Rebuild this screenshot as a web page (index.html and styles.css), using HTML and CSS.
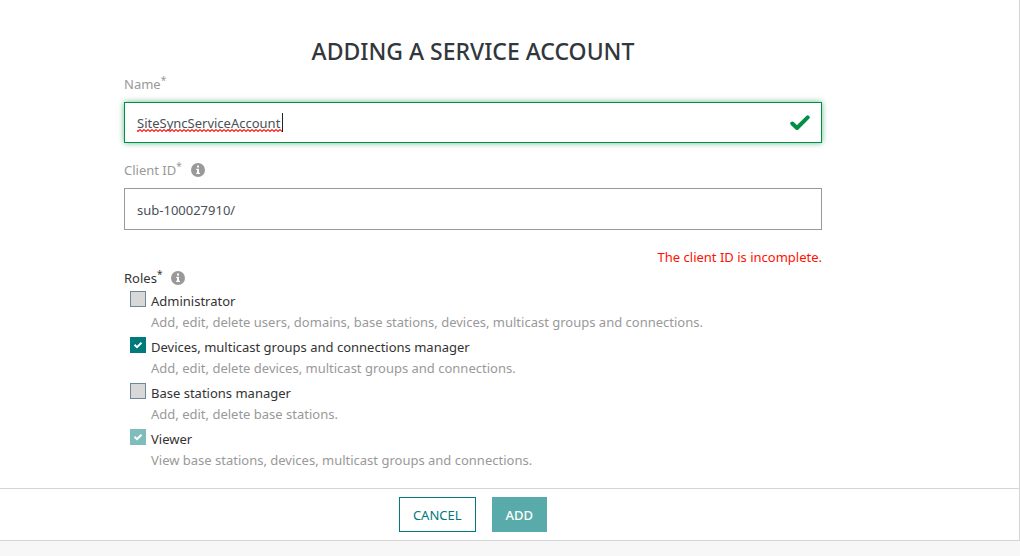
FILE: index.html
```html
<!DOCTYPE html>
<html lang="en">
<head>
<meta charset="utf-8">
<title>Adding a service account</title>
<link rel="stylesheet" href="styles.css">
</head>
<body>
<svg class="defs" aria-hidden="true">
  <symbol id="info" viewBox="0 0 14 14">
    <circle cx="7" cy="7" r="7" fill="#999"/>
    <path d="M6 2.5h2v2H6zM5.2 5.7H8v4h1v1.4H5.2V9.700H6V7h-.8z" fill="#fff"/>
  </symbol>
</svg>
<form class="dialog">
  <div class="content">
    <h1 class="title">ADDING A SERVICE ACCOUNT</h1>

    <div class="label-row"><label class="label" for="name">Name<sup class="star">*</sup></label></div>
    <div class="field">
      <input class="input input-valid" id="name" type="text" value="SiteSyncServiceAccount">
      <svg class="squiggle" aria-hidden="true">
        <defs><pattern id="wave" width="4" height="3" patternUnits="userSpaceOnUse"><path d="M-1 0.500L1 2.500L3 0.500L5 2.500" fill="none" stroke="#f22" stroke-width="1.200"/></pattern></defs>
        <rect width="100%" height="3" fill="url(#wave)"/>
      </svg>
      <span class="caret"></span>
      <svg class="tick" viewBox="0 0 20 16" aria-hidden="true"><path d="M2.300 8.500L7 13L17.700 2.300" fill="none" stroke="#008f45" stroke-width="4" stroke-linecap="round" stroke-linejoin="round"/></svg>
    </div>

    <div class="label-row label-row-next"><label class="label" for="client">Client ID<sup class="star">*</sup></label><svg class="info"><use href="#info"/></svg></div>
    <div class="field">
      <input class="input" id="client" type="text" value="sub-100027910/">
    </div>
    <p class="error">The client ID is incomplete.</p>

    <fieldset class="roles">
      <legend class="legend"><span>Roles<sup class="star">*</sup></span><svg class="info"><use href="#info"/></svg></legend>
      <div class="role">
        <input class="check" type="checkbox" id="r1">
        <div class="role-text"><label class="role-name" for="r1">Administrator</label><p class="hint">Add, edit, delete users, domains, base stations, devices, multicast groups and connections.</p></div>
      </div>
      <div class="role">
        <span class="check-wrap"><input class="check" type="checkbox" id="r2" checked><svg class="mark" viewBox="0 0 16 16" aria-hidden="true"><path d="M4.500 7.800L7 10.200L11.500 5.700" /></svg></span>
        <div class="role-text"><label class="role-name" for="r2">Devices, multicast groups and connections manager</label><p class="hint">Add, edit, delete devices, multicast groups and connections.</p></div>
      </div>
      <div class="role">
        <input class="check" type="checkbox" id="r3">
        <div class="role-text"><label class="role-name" for="r3">Base stations manager</label><p class="hint">Add, edit, delete base stations.</p></div>
      </div>
      <div class="role">
        <span class="check-wrap"><input class="check" type="checkbox" id="r4" checked disabled><svg class="mark" viewBox="0 0 16 16" aria-hidden="true"><path d="M4.500 7.800L7 10.200L11.500 5.700" /></svg></span>
        <div class="role-text"><label class="role-name" for="r4">Viewer</label><p class="hint">View base stations, devices, multicast groups and connections.</p></div>
      </div>
    </fieldset>
  </div>
  <div class="footer">
    <button class="button" type="button">CANCEL</button>
    <button class="button button-add" type="submit" disabled>ADD</button>
  </div>
</form>
</body>
</html>
```
FILE: styles.css
```css
* { box-sizing: border-box; }
body {
  margin: 0;
  background: #f7f7f7;
  color: #333;
  font: 13px/20px "Noto Sans", "Open Sans", sans-serif;
}
.defs { display: none; }
.dialog {
  background: #fff;
  border-right: 1px solid #d5d5d5;
  border-bottom: 1px solid #d5d5d5;
}
.content { padding: 36px 197px 16px 124px; }
.title {
  margin: 0 0 8px;
  color: #32373c;
  font-size: 23px;
  line-height: 30px;
  font-weight: 500;
  text-align: center;
}
.label-row { display: flex; align-items: center; height: 20px; margin-bottom: 8px; }
.label-row-next { margin-top: 17px; }
.label { color: #999; }
.star { font-size: 10px; line-height: 0; vertical-align: 5px; }
.info { width: 14px; height: 14px; margin-left: 9px; }
.field { position: relative; }
.input {
  display: block;
  width: 100%;
  height: 42px;
  padding: 2px 12px 0;
  border: 1px solid #999;
  border-radius: 0;
  outline: 0;
  background: #fff;
  color: #495057;
  font: inherit;
}
.input-valid {
  height: 41px;
  padding-top: 0;
  border-color: #008f45;
  box-shadow: 0 0 6px #008f4599;
}
.squiggle { position: absolute; left: 13px; top: 27px; width: 146px; height: 3px; }
.caret { position: absolute; left: 158px; top: 11px; width: 1px; height: 19px; background: #222; }
.tick { position: absolute; right: 12px; top: 13px; width: 20px; height: 16px; }
.error { margin: 17px 0 0; color: #f10; text-align: right; }
.roles { margin: 1px 0 0; padding: 0; border: 0; min-width: 0; }
.legend { display: flex; align-items: center; height: 20px; padding: 0; }
.role { display: flex; gap: 5px; height: 46px; padding: 3px 0 0 6px; }
.check {
  appearance: none;
  flex: none;
  display: block;
  width: 16px;
  height: 16px;
  margin: 0;
  border: 1px solid #6b8a99;
  border-radius: 0;
  background: #d8d8d8;
}
.check:checked { border-color: #007a7a; background: #007a7a; }
.check:disabled { border-color: #7fbcbc; background: #7fbcbc; }
.check-wrap { position: relative; flex: none; width: 16px; height: 16px; }
.mark {
  position: absolute;
  inset: 0;
  fill: none;
  stroke: #fff;
  stroke-width: 2;
  pointer-events: none;
}
.role-text { flex: 1; min-width: 0; }
.role-name { display: block; line-height: 20px; }
.hint { margin: 0; color: #999; line-height: 22px; }
.footer {
  display: flex;
  justify-content: center;
  gap: 16px;
  padding: 8px 197px 8px 124px;
  border-top: 1px solid #d5d5d5;
}
.button {
  height: 35px;
  padding: 0 13px;
  border: 1px solid #007a7a;
  background: #fff;
  color: #007a7a;
  font: inherit;
}
.button-add { border-color: #59aaaa; background: #59aaaa; color: #fff; font-weight: 500; }
```
